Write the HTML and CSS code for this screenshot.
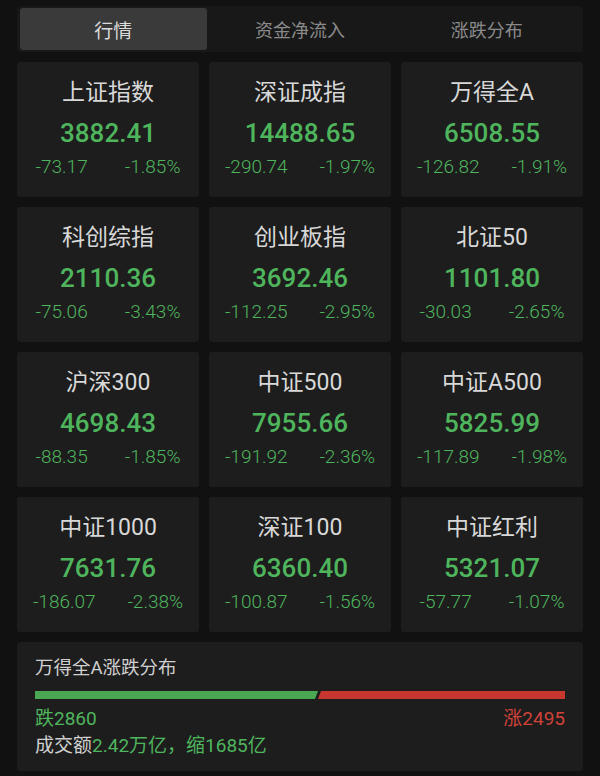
FILE: index.html
```html
<!DOCTYPE html>
<html lang="zh-CN">
<head>
    <meta charset="UTF-8">
    <meta name="viewport" content="width=device-width, initial-scale=1.0">
    <title>行情</title>
    <link rel="stylesheet" href="styles.css">
</head>
<body>
    <div class="tabs">
        <div class="tab active">行情</div>
        <div class="tab">资金净流入</div>
        <div class="tab">涨跌分布</div>
    </div>

    <div class="grid">
        <div class="card">
            <div class="name">上证指数</div>
            <div class="value">3882.41</div>
            <div class="change"><span>-73.17</span><span>-1.85%</span></div>
        </div>
        <div class="card">
            <div class="name">深证成指</div>
            <div class="value">14488.65</div>
            <div class="change"><span>-290.74</span><span>-1.97%</span></div>
        </div>
        <div class="card">
            <div class="name">万得全A</div>
            <div class="value">6508.55</div>
            <div class="change"><span>-126.82</span><span>-1.91%</span></div>
        </div>
        <div class="card">
            <div class="name">科创综指</div>
            <div class="value">2110.36</div>
            <div class="change"><span>-75.06</span><span>-3.43%</span></div>
        </div>
        <div class="card">
            <div class="name">创业板指</div>
            <div class="value">3692.46</div>
            <div class="change"><span>-112.25</span><span>-2.95%</span></div>
        </div>
        <div class="card">
            <div class="name">北证50</div>
            <div class="value">1101.80</div>
            <div class="change"><span>-30.03</span><span>-2.65%</span></div>
        </div>
        <div class="card">
            <div class="name">沪深300</div>
            <div class="value">4698.43</div>
            <div class="change"><span>-88.35</span><span>-1.85%</span></div>
        </div>
        <div class="card">
            <div class="name">中证500</div>
            <div class="value">7955.66</div>
            <div class="change"><span>-191.92</span><span>-2.36%</span></div>
        </div>
        <div class="card">
            <div class="name">中证A500</div>
            <div class="value">5825.99</div>
            <div class="change"><span>-117.89</span><span>-1.98%</span></div>
        </div>
        <div class="card">
            <div class="name">中证1000</div>
            <div class="value">7631.76</div>
            <div class="change"><span>-186.07</span><span>-2.38%</span></div>
        </div>
        <div class="card">
            <div class="name">深证100</div>
            <div class="value">6360.40</div>
            <div class="change"><span>-100.87</span><span>-1.56%</span></div>
        </div>
        <div class="card">
            <div class="name">中证红利</div>
            <div class="value">5321.07</div>
            <div class="change"><span>-57.77</span><span>-1.07%</span></div>
        </div>
    </div>

    <div class="dist">
        <div class="dist-title">万得全A涨跌分布</div>
        <div class="bar">
            <div class="bar-down" style="width: 53.4%"></div>
            <div class="bar-up"></div>
        </div>
        <div class="counts">
            <span class="down">跌2860</span>
            <span class="up">涨2495</span>
        </div>
        <div class="turnover">成交额<span class="down">2.42万亿，缩1685亿</span></div>
    </div>
</body>
</html>
```

FILE: styles.css
```css
body {
    margin: 0;
    padding: 6px 17px 0;
    background-color: #111111;
    font-family: Roboto, "Noto Sans CJK SC", sans-serif;
    color: #d6d6d6;
}

/* top tab switcher */
.tabs {
    display: flex;
    background-color: #181818;
    border-radius: 4px;
    padding: 2px 3px;
    height: 42px;
}

.tab {
    flex: 1;
    display: flex;
    justify-content: center;
    align-items: center;
    font-size: 18px;
    color: #8a8a8a;
    border-radius: 3px;
}

.tab.active {
    background-color: #3a3a3a;
    color: #dcdcdc;
    font-size: 19px;
}

/* index cards */
.grid {
    display: grid;
    grid-template-columns: repeat(3, 1fr);
    gap: 10px;
    margin-top: 10px;
}

.card {
    background-color: #1d1d1d;
    border-radius: 3px;
    height: 135px;
    box-sizing: border-box;
    padding-top: 16px;
    text-align: center;
}

.name {
    font-size: 23px;
    line-height: 30px;
    color: #d8d8d8;
}

.value {
    font-size: 26px;
    line-height: 34px;
    margin-top: 8px;
    font-weight: 500;
    color: #4fb55d;
}

.change {
    display: flex;
    justify-content: space-around;
    font-size: 19px;
    font-weight: 300;
    line-height: 24px;
    margin-top: 5px;
    color: #4fb55d;
}

/* rise / fall distribution */
.dist {
    background-color: #1d1d1d;
    border-radius: 3px;
    margin-top: 10px;
    height: 129px;
    box-sizing: border-box;
    padding: 14px 18px 0;
}

.dist-title {
    font-size: 18.5px;
    line-height: 24px;
    color: #d0d0d0;
}

.bar {
    display: flex;
    height: 8px;
    margin-top: 11px;
}

.bar-down {
    background-color: #4aa853;
    clip-path: polygon(0 0, 100% 0, calc(100% - 3px) 100%, 0 100%);
}

.bar-up {
    flex: 1;
    margin-left: -1px;
    background-color: #c8372f;
    clip-path: polygon(4px 0, 100% 0, 100% 100%, 1px 100%);
}

.counts {
    display: flex;
    justify-content: space-between;
    font-size: 19px;
    line-height: 24px;
    margin-top: 8px;
}

.turnover {
    font-size: 19px;
    line-height: 26px;
    margin-top: 2px;
    color: #d0d0d0;
}

.down {
    color: #4fb55d;
}

.up {
    color: #d0423a;
}
```
